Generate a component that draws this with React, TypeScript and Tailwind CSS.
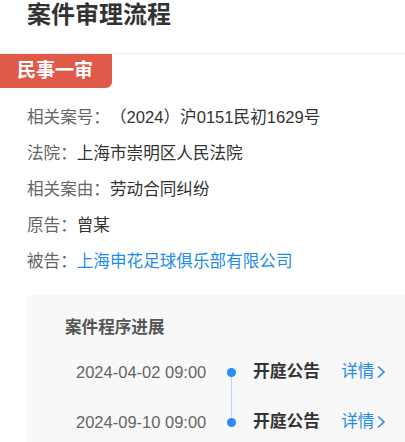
import React from 'react';

const INFO = [
  { label: "相关案号：", value: "（2024）沪0151民初1629号" },
  { label: "法院：", value: "上海市崇明区人民法院" },
  { label: "相关案由：", value: "劳动合同纠纷" },
  { label: "原告：", value: "曾某" },
  { label: "被告：", value: "上海申花足球俱乐部有限公司", link: true },
];

const STEPS = [
  { time: "2024-04-02 09:00", title: "开庭公告" },
  { time: "2024-09-10 09:00", title: "开庭公告" },
];

export default function App() {
  return (
    <div className="w-[405px] h-[442px] overflow-hidden bg-white font-['Liberation_Sans','Noto_Sans_CJK_SC',sans-serif]">
      <h1 className="h-[53px] pl-[27px] text-[24px] leading-[30px] font-bold text-[#333]">案件审理流程</h1>

      <div className="border-t border-[#eeeeee]">
        <div className="inline-flex h-[34px] items-center rounded-br-[6px] bg-[#e05a4a] pl-[17px] pr-[19px] text-[19px] font-bold text-white">
          民事一审
        </div>
      </div>

      <div className="mt-[12px] pl-[27px] text-[16.6px] leading-[36px]">
        {INFO.map(row => (
          <div key={row.label} className="flex">
            <span className="text-[#666]">{row.label}</span>
            <span className={row.link ? "text-[#1f8ceb]" : "text-[#333]"}>{row.value}</span>
          </div>
        ))}
      </div>

      <div className="ml-[27px] mt-[15px] h-[200px] bg-[#f8f8f8] pl-[38px] pt-[22px]">
        <div className="text-[16.6px] leading-[22px] font-bold text-[#555]">案件程序进展</div>
        <div className="mt-[8px]">
          {STEPS.map((s, i) => (
            <div key={i} className="flex h-[50px] items-stretch pl-[11px]">
              <div className="flex w-[148px] shrink-0 items-center text-[16.5px] text-[#666]">{s.time}</div>
              <div className="flex w-[14px] shrink-0 flex-col items-center">
                <div className={`flex-1 w-px ${i === 0 ? "bg-transparent" : "bg-[#b8d8fb]"}`} />
                <div className="h-[9px] w-[9px] rounded-full bg-[#2b8cf5]" />
                <div className={`flex-1 w-px ${i === STEPS.length - 1 ? "bg-transparent" : "bg-[#b8d8fb]"}`} />
              </div>
              <div className="flex shrink-0 items-center pl-[15px] text-[16.8px] font-bold text-[#333]">{s.title}</div>
              <div className="ml-[21px] flex shrink-0 items-center text-[16.6px] text-[#1f8ceb]">
                详情
                <svg width="10" height="14" viewBox="0 0 10 14" className="ml-[2px]">
                  <polyline points="2,1.5 8,7 2,12.5" fill="none" stroke="#1f8ceb" strokeWidth="1.6" />
                </svg>
              </div>
            </div>
          ))}
        </div>
      </div>
    </div>
  );
}
